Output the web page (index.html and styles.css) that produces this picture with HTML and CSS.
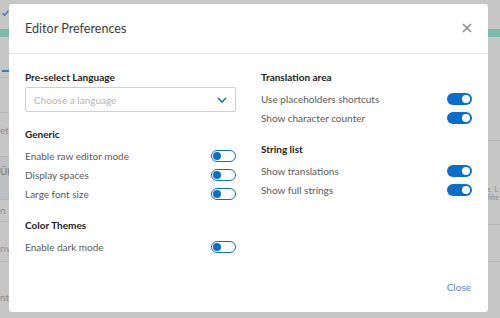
FILE: index.html
```html
<!DOCTYPE html>
<html>
<head>
<meta charset="utf-8">
<link rel="stylesheet" href="styles.css">
</head>
<body>
<div class="page">
  <div class="topbar">
    <svg class="check" width="7" height="6" viewBox="0 0 7 6"><path d="M0.5 3.2 L2.6 5.2 L6.5 0.8" fill="none" stroke="#3a78c0" stroke-width="1.4"/></svg>
  </div>
  <div class="teal"></div>
  <div class="cols">
    <div class="bg-left">
      <div class="bgrow r1"><span class="dash"></span></div>
      <div class="bgrow r2"></div>
      <div class="bgrow r3"><span class="bgtext">et</span></div>
      <div class="bgrow r4"><span class="bgtext dark">Üb</span></div>
      <div class="bgrow r5"><span class="bgtext">n</span></div>
      <div class="bgrow r6"><span class="bgtext">nv</span></div>
      <div class="bgrow r7"><span class="bgtext">ntl</span></div>
    </div>
    <div class="bg-right">
      <div class="bgrow q1"></div>
      <div class="bgrow q2"><span class="bgtext2">e. L</span><span class="bgtext2 second">filte</span></div>
      <div class="bgrow q3"></div>
      <div class="bgrow q4"></div>
    </div>
  </div>
</div>

<div class="modal">
  <div class="modal-header">
    <h1 class="title">Editor Preferences</h1>
    <svg class="close-x" width="10" height="10" viewBox="0 0 10 10"><path d="M1 1 L9 9 M9 1 L1 9" stroke="#8c8c8c" stroke-width="1.6" fill="none"/></svg>
  </div>
  <div class="modal-body">
    <div class="col">
      <div class="section">
        <div class="heading">Pre-select Language</div>
        <div class="select">
          <span class="placeholder">Choose a language</span>
          <svg width="10" height="6" viewBox="0 0 10 6"><path d="M1 1 L5 5 L9 1" fill="none" stroke="#1a6fc4" stroke-width="1.6"/></svg>
        </div>
      </div>
      <div class="section">
        <div class="heading">Generic</div>
        <div class="row"><span>Enable raw editor mode</span><span class="toggle off"></span></div>
        <div class="row"><span>Display spaces</span><span class="toggle off"></span></div>
        <div class="row"><span>Large font size</span><span class="toggle off"></span></div>
      </div>
      <div class="section">
        <div class="heading">Color Themes</div>
        <div class="row"><span>Enable dark mode</span><span class="toggle off"></span></div>
      </div>
    </div>
    <div class="col">
      <div class="section">
        <div class="heading">Translation area</div>
        <div class="row"><span>Use placeholders shortcuts</span><span class="toggle on"></span></div>
        <div class="row"><span>Show character counter</span><span class="toggle on"></span></div>
      </div>
      <div class="section">
        <div class="heading">String list</div>
        <div class="row"><span>Show translations</span><span class="toggle on"></span></div>
        <div class="row"><span>Show full strings</span><span class="toggle on"></span></div>
      </div>
    </div>
  </div>
  <div class="modal-footer">
    <a class="close-link">Close</a>
  </div>
</div>
</body>
</html>
```

FILE: styles.css
```css
* { box-sizing: border-box; }
html, body { margin: 0; padding: 0; }
body {
  width: 500px;
  height: 318px;
  overflow: hidden;
  background: #c6c6c6;
  font-family: Lato, "Open Sans", sans-serif;
  position: relative;
}

/* background page */
.page { width: 500px; height: 318px; }
.topbar { height: 29px; position: relative; }
.check { position: absolute; left: 2px; top: 10px; }
.teal { height: 8px; background: #79bcab; }
.cols { display: flex; }
.bg-left { width: 250px; }
.bg-right { flex: 1; }
.bgrow { border-bottom: 1px solid #b6b6b6; position: relative; }
.r1 { height: 41px; }
.r2 { height: 35px; }
.r3 { height: 44px; }
.r4 { height: 43px; background: #bcbfc4; }
.r5 { height: 22px; }
.r6 { height: 40px; }
.r7 { height: 56px; border-bottom: none; }
.q1 { height: 104px; }
.q2 { height: 84px; }
.q3 { height: 37px; }
.q4 { height: 56px; border-bottom: none; }
.dash { position: absolute; left: 2px; top: 33px; width: 7px; height: 2px; background: #3a78c0; }
.bgtext {
  display: block;
  font-size: 10px;
  line-height: 12px;
  color: #8e8e8e;
  padding-top: 10px;
}
.r3 .bgtext { padding-top: 11px; }
.r4 .bgtext { padding-top: 8px; color: #7a7a7a; }
.r5 .bgtext { padding-top: 4px; }
.r6 .bgtext { padding-top: 20px; }
.r7 .bgtext { padding-top: 29px; }
.bgtext2 {
  display: block;
  padding-left: 237px;
  padding-top: 44px;
  font-size: 7px;
  line-height: 8px;
  color: #8e8e8e;
}
.bgtext2.second { padding-top: 0; }

/* modal */
.modal {
  position: absolute;
  left: 9px;
  top: 4px;
  width: 479px;
  height: 308px;
  background: #fff;
  border-radius: 3px;
  display: flex;
  flex-direction: column;
}
.modal-header {
  height: 50px;
  border-bottom: 1px solid #e6e6e6;
  display: flex;
  align-items: center;
  justify-content: space-between;
  padding: 0 16px 0 16px;
}
.title {
  margin: 0;
  font-size: 12.6px;
  font-weight: 400;
  color: #3c3c3c;
  padding-bottom: 1px;
}
.close-x { margin-top: -2px; }

.modal-body {
  flex: 1;
  display: grid;
  grid-template-columns: 211px 211px;
  column-gap: 25px;
  padding: 16px 16px 0 16px;
}
.section + .section { margin-top: 15px; }
.heading {
  font-size: 10px;
  font-weight: 700;
  line-height: 14px;
  color: #222;
  margin-bottom: 5px;
}
.select {
  margin-top: -2px;
  margin-bottom: 1px;
  height: 25px;
  border: 1px solid #cfcfcf;
  border-radius: 2px;
  display: flex;
  align-items: center;
  justify-content: space-between;
  padding: 0 8px 0 8px;
}
.placeholder { font-size: 10px; color: #b5b5b5; }
.row {
  height: 19px;
  display: flex;
  align-items: center;
  justify-content: space-between;
  font-size: 10px;
  color: #5a5a5a;
}
.toggle {
  width: 25px;
  height: 12px;
  border-radius: 6px;
  position: relative;
}
.toggle.on { background: #0b6fc9; }
.toggle.off { background: #fff; border: 1px solid #0b6fc9; }
.toggle::after {
  content: "";
  position: absolute;
  width: 8px;
  height: 8px;
  border-radius: 50%;
  top: 2px;
}
.toggle.on::after { right: 2px; background: #fff; }
.toggle.off::after { left: 1px; top: 1px; background: #0b6fc9; }

.modal-footer {
  display: flex;
  justify-content: flex-end;
  padding: 0 17px 19px 16px;
}
.close-link {
  font-size: 10px;
  color: #5a86d8;
  line-height: 12px;
}
```
